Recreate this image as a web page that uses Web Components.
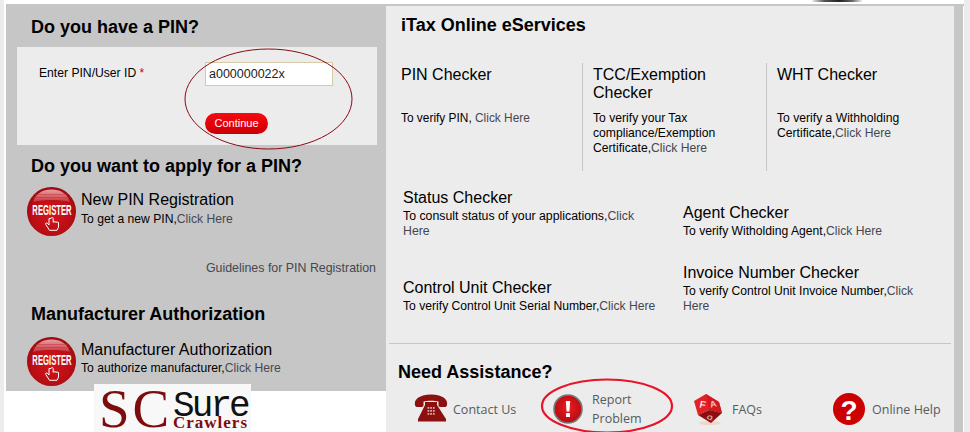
<!DOCTYPE html>
<html lang="en"><head><meta charset="utf-8"><title>iTax</title>
<style>
html,body{margin:0;padding:0;height:432px;overflow:hidden;background:#fff;font-family:"Liberation Sans",Arial,sans-serif}
</style></head><body>
<itax-page>
  <left-column slot="left"></left-column>
  <right-column slot="right"></right-column>
</itax-page>
<script>
const LINK='#47474f';
function def(name,html){
  customElements.define(name,class extends HTMLElement{
    constructor(){super();const r=this.attachShadow({mode:'open'});r.innerHTML=html;}
  });
}
const base=`*{box-sizing:border-box}`;
def('section-heading',`<style>:host{display:block;font:bold 18px/22px "Liberation Sans",Arial,sans-serif;color:#000}</style><slot></slot>`);
def('click-link',`<style>:host{display:inline;color:${LINK}}</style><slot></slot>`);
def('register-icon',`<style>:host{display:block;width:49px;height:49px;flex:none}svg{display:block}</style>
<svg width="49" height="49" viewBox="0 0 49 49">
<defs><radialGradient id="g" cx=".5" cy=".55" r=".6"><stop offset="0" stop-color="#d8141c"/><stop offset=".7" stop-color="#b80d14"/><stop offset="1" stop-color="#8a0a0f"/></radialGradient>
<linearGradient id="s" x1="0" y1="0" x2="0" y2="1"><stop offset="0" stop-color="#e9a0a4"/><stop offset="1" stop-color="#c7333a"/></linearGradient></defs>
<circle cx="24.5" cy="24.5" r="24.5" fill="url(#g)"/>
<path d="M6 15C9 6 16 2.500 24.500 2.500S40 6 43 15C37 13.500 31 13 24.500 13S12 13.500 6 15Z" fill="url(#s)"/>
<path d="M8 7.500H41M6 10.500H43" stroke="#b8343b" stroke-width=".8" opacity=".6"/>
<text transform="translate(25 28) scale(.55 1)" text-anchor="middle" font-family="Liberation Sans,Arial,sans-serif" font-weight="bold" font-size="14" fill="#fff">REGISTER</text>
<path d="M22 31.500v6.500l-1.800-1.800c-1-.8-2.200.3-1.400 1.300l3.700 5.800h7.500l1.500-3.200v-4.300c0-1.200-1.600-1.200-1.700-.2 0-1.200-1.700-1.200-1.800-.2 0-1.200-1.700-1.100-1.800-.1v-3.800c0-1.300-2.200-1.300-2.200 0Z" fill="none" stroke="#fff" stroke-width="1"/>
</svg>`);
def('register-entry',`<style>${base}:host{display:flex;margin-left:21px}
.t{padding:4px 0 0 5px}.h{font:16px/18px "Liberation Sans",Arial,sans-serif;color:#000}
.s{font:12.150px/15px "Liberation Sans",Arial,sans-serif;color:#000;margin-top:var(--sub-gap,3px)}</style>
<register-icon></register-icon><div class="t"><div class="h"><slot name="title"></slot></div><div class="s"><slot></slot></div></div>`);
def('pin-form',`<style>${base}:host{display:grid;grid-template-columns:166px 128px;align-content:start;margin:9px 0 0 11px;width:360px;height:98px;background:#ececec;padding:15px 0 0 22px;position:relative;font:12.150px/15px "Liberation Sans",Arial,sans-serif;color:#000}
label{padding-top:4px}b{color:#d40000;font-weight:normal}
.i{width:128px;height:24px;border:1px solid #d5c9a6;background:#fff;font:12.500px/22px "Liberation Sans",Arial,sans-serif;padding-left:3px;color:#222}
button{grid-column:2;justify-self:start;margin-top:27px;width:63px;height:21px;border:0;border-radius:11px;padding:0;background:linear-gradient(#f70a10,#e00009 60%,#c40008);color:#fff;font:11px/21px "Liberation Sans",Arial,sans-serif}
svg{position:absolute;left:167px;top:1px;overflow:visible}</style>
<label>Enter PIN/User ID <b>*</b></label><div class="i">a000000022x</div><button>Continue</button>
<svg width="170" height="102"><ellipse cx="84.500" cy="51" rx="83.500" ry="50" fill="none" stroke="#8a0a14" stroke-width="1"/></svg>`);
def('left-column',`<style>${base}:host{display:block;box-sizing:border-box;background:#c6c6c6;height:387px;padding-top:12px}
section-heading{margin-left:25px}
.g{margin-top:10px}
.r{margin-top:10px}
.gl{margin:25px 10px 0 0;text-align:right;font:12.400px/15px "Liberation Sans",Arial,sans-serif;color:${LINK}}
.m{margin-top:27px}</style>
<section-heading>Do you have a PIN?</section-heading>
<pin-form></pin-form>
<section-heading class="g">Do you want to apply for a PIN?</section-heading>
<register-entry class="r"><span slot="title">New PIN Registration</span>To get a new PIN,<click-link>Click Here</click-link></register-entry>
<div class="gl">Guidelines for PIN Registration</div>
<section-heading class="m">Manufacturer Authorization</section-heading>
<register-entry class="r" style="margin-top:12px;--sub-gap:2px"><span slot="title">Manufacturer Authorization</span>To authorize manufacturer,<click-link>Click Here</click-link></register-entry>`);
def('service-item',`<style>${base}:host{display:block;font:12.150px/15px "Liberation Sans",Arial,sans-serif;color:#000}
.h{font:16px/18px "Liberation Sans",Arial,sans-serif;margin-bottom:2px}</style>
<div class="h"><slot name="title"></slot></div><div><slot></slot></div>`);
def('checker-cell',`<style>${base}:host{display:block;padding-top:3px;font:12.150px/15px "Liberation Sans",Arial,sans-serif;color:#000}
.h{font:16px/18px "Liberation Sans",Arial,sans-serif;height:36px;margin-bottom:9px}</style>
<div class="h"><slot name="title"></slot></div><div><slot></slot></div>`);
def('assist-link',`<style>${base}:host{display:flex;align-items:center;gap:var(--gap,6px);font:12.500px/19px "Open Sans",sans-serif;color:#555b60}
::slotted(svg){display:block;flex:none}</style><slot name="icon"></slot><span><slot></slot></span>`);
def('right-column',`<style>${base}:host{display:block;box-sizing:border-box;background:#ececec;height:426px;padding-top:8px;position:relative}
section-heading.t{margin:0 0 0 15px}
.three{display:grid;grid-template-columns:196px 184px 188px;height:108px;margin-top:27px}
.three checker-cell{padding-left:15px}
.three checker-cell+checker-cell{border-left:1px solid #c6c6c6;padding-left:10px;padding-right:22px}
.two{display:grid;grid-template-columns:280px 255px;margin:18px 0 0 17px}
.two>div:first-child service-item{width:255px}
.two>div:last-child{padding-top:15px}
.two>div:last-child service-item{width:240px}
.c2{margin-top:40px}.c3{margin-top:25px}
hr{border:0;height:1px;background:#c6c6c6;margin:29px 0 0 3px;width:562px}
section-heading.n{margin:17px 0 0 12px}
.links{display:grid;grid-template-columns:139px 140px 140px 120px;margin:7px 0 0 28px;height:36px}
.ring{position:absolute;left:155px;top:372px;overflow:visible}
</style>
<section-heading class="t">iTax Online eServices</section-heading>
<div class="three">
<checker-cell style="font-size:11.900px"><span slot="title">PIN Checker</span>To verify PIN, <click-link>Click Here</click-link></checker-cell>
<checker-cell><span slot="title">TCC/Exemption Checker</span>To verify your Tax compliance/Exemption Certificate,<click-link>Click Here</click-link></checker-cell>
<checker-cell><span slot="title">WHT Checker</span>To verify a Withholding Certificate,<click-link>Click Here</click-link></checker-cell>
</div>
<div class="two"><div>
<service-item style="font-size:12.300px"><span slot="title">Status Checker</span>To consult status of your applications,<click-link>Click Here</click-link></service-item>
<service-item class="c2"><span slot="title">Control Unit Checker</span>To verify Control Unit Serial Number,<click-link>Click Here</click-link></service-item>
</div><div>
<service-item><span slot="title">Agent Checker</span>To verify Witholding Agent,<click-link>Click Here</click-link></service-item>
<service-item class="c3"><span slot="title">Invoice Number Checker</span>To verify Control Unit Invoice Number,<click-link>Click Here</click-link></service-item>
</div></div>
<hr>
<section-heading class="n">Need Assistance?</section-heading>
<div class="links">
<assist-link style="--gap:5px"><svg slot="icon" width="34" height="30" viewBox="0 0 34 30">
<path d="M1 11C0 6 4 3 9 1.500c5-1.500 11-1.500 16 0 5 1.500 9 4.500 8 9.500-.3 1.500-1 2-2.500 2h-4c-1.500 0-2-.8-2-2V7.500c-3.500-1-11.500-1-15 0V11c0 1.200-.5 2-2 2h-4C2 13 1.300 12.500 1 11Z" fill="#8c1010"/>
<path d="M11 8h12v3l9 14v2.500H4V25l7-14Z" fill="#8c1010"/>
<g fill="#d9a0a0"><rect x="13.500" y="13" width="1.800" height="1.800"/><rect x="16.200" y="13" width="1.800" height="1.800"/><rect x="18.900" y="13" width="1.800" height="1.800"/><rect x="13.500" y="16" width="1.800" height="1.800"/><rect x="16.200" y="16" width="1.800" height="1.800"/><rect x="18.900" y="16" width="1.800" height="1.800"/><rect x="13.500" y="19" width="1.800" height="1.800"/><rect x="16.200" y="19" width="1.800" height="1.800"/><rect x="18.900" y="19" width="1.800" height="1.800"/></g></svg>Contact Us</assist-link>
<assist-link style="--gap:9px"><svg slot="icon" width="30" height="30" viewBox="0 0 30 30">
<defs><radialGradient id="rg" cx=".5" cy=".45" r=".55"><stop offset="0" stop-color="#ee1c20"/><stop offset="1" stop-color="#b30d10"/></radialGradient></defs>
<circle cx="15" cy="15" r="14" fill="url(#rg)" stroke="#77777a" stroke-width="1.600"/>
<path d="M12.800 7h4.400l-.8 10.500h-2.800Z" fill="#fff"/><rect x="13" y="19" width="4" height="4" rx=".6" fill="#fff"/></svg>Report<br>Problem</assist-link>
<assist-link style="--gap:8px"><svg slot="icon" width="31" height="33" viewBox="0 0 31 33">
<ellipse cx="17" cy="30" rx="11" ry="2" fill="#f3d5c8"/>
<path d="M1 8 13 1l13 8 3 11-13-3-11 5Z" fill="#e22226"/>
<path d="M13 1l13 8 3 11-13-3Z" fill="#d01c20"/>
<path d="M5 22l11-5 13 3-11 10Z" fill="#8f0c10"/>
<text transform="translate(9 15) rotate(12)" text-anchor="middle" font-family="Liberation Sans,Arial,sans-serif" font-size="10" font-weight="bold" fill="#f6dcdc">F</text>
<text transform="translate(21 14) rotate(-15)" text-anchor="middle" font-family="Liberation Sans,Arial,sans-serif" font-size="9" font-weight="bold" fill="#f0c4c4">A</text>
<text transform="translate(17 26.500) rotate(-10) scale(1 .7)" text-anchor="middle" font-family="Liberation Sans,Arial,sans-serif" font-size="8" font-weight="bold" fill="#d8b0b0">Q</text></svg>FAQs</assist-link>
<assist-link style="--gap:7px"><svg slot="icon" width="32" height="32" viewBox="0 0 32 32"><circle cx="16" cy="16" r="16" fill="#cc0000"/><text x="16" y="26.500" text-anchor="middle" font-family="Liberation Sans,Arial,sans-serif" font-weight="bold" font-size="28" fill="#fff">?</text></svg>Online Help</assist-link>
</div>
<svg class="ring" width="132" height="56"><ellipse cx="66" cy="28" rx="65" ry="26.500" fill="none" stroke="#e8142a" stroke-width="2.200"/></svg>`);
def('sc-logo',`<style>${base}:host{display:flex;width:157px;height:48px;background:#f8f8f8;padding:5px 0 0 5px}
.sc{font:55px/40px "Liberation Serif",serif;color:#7d0c0c;letter-spacing:3px;width:74px}
.su{font:36px/24px "Liberation Mono",monospace;color:#111;letter-spacing:-2.900px;margin-top:6px}
.cr{font:bold 17px/12px "Liberation Serif",serif;color:#7d0c0c;letter-spacing:1px;margin-top:-2px}</style>
<div class="sc">SC</div><div><div class="su">Sure</div><div class="cr">Crawlers</div></div>`);
def('itax-page',`<style>${base}:host{display:grid;grid-template-columns:4px 2px 380px 568px 10px 6px;grid-template-rows:4px 428px;width:970px;height:432px;position:relative;overflow:hidden;background:#fff}
.strip{background:#ececec;grid-row:1/3}
.sp{grid-row:1/3}
.l{grid-column:3;grid-row:1/3;padding-top:4px}
.r{grid-column:4;grid-row:1/3;padding-top:4px}
.band{height:2px;background:#c6c6c6;width:578px}
.gray{grid-column:5;grid-row:1/3;padding-top:6px}
.gray div{background:#c6c6c6;height:100%;margin-right:1px}
.logo{position:absolute;left:94px;top:384px}
.clip{position:absolute;left:812px;top:0;width:50px;height:2px;background:linear-gradient(90deg,#eee,#555 25%,#222 55%,#666 80%,#eee)}</style>
<div class="strip"></div><div class="sp"></div>
<div class="l"><slot name="left"></slot></div>
<div class="r"><div class="band"></div><slot name="right"></slot></div>
<div class="gray"><div></div></div>
<div class="strip" style="grid-column:6"></div>
<div class="clip"></div>
<sc-logo class="logo"></sc-logo>`);
</script>
</body></html>
